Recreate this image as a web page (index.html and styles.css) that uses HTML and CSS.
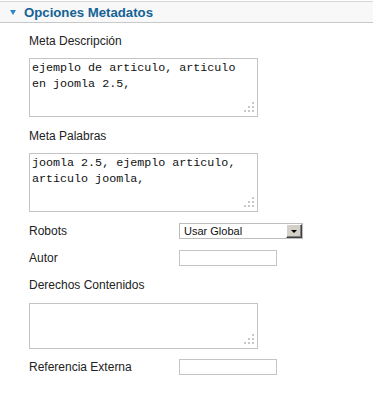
FILE: index.html
```html
<!DOCTYPE html>
<html lang="es">
<head>
  <meta charset="UTF-8">
  <title>Opciones Metadatos</title>
  <link rel="stylesheet" href="styles.css">
</head>
<body>

  <div class="pane">
    <h3 class="pane-title"><span class="arrow"></span>Opciones Metadatos</h3>

    <div class="pane-body">
      <label class="label">Meta Descripción</label>
      <div class="area-wrap tall">
        <textarea class="area">ejemplo de articulo, articulo en joomla 2.5,</textarea>
        <span class="grip"></span>
      </div>

      <label class="label gap">Meta Palabras</label>
      <div class="area-wrap tall">
        <textarea class="area">joomla 2.5, ejemplo articulo, articulo joomla,</textarea>
        <span class="grip"></span>
      </div>

      <div class="row first">
        <span class="label">Robots</span>
        <div class="select">
          <span class="select-text">Usar Global</span>
          <span class="select-btn"><span class="tri"></span></span>
        </div>
      </div>

      <div class="row">
        <span class="label">Autor</span>
        <input type="text" class="text-input">
      </div>

      <label class="label gap">Derechos Contenidos</label>
      <div class="area-wrap short">
        <textarea class="area"></textarea>
        <span class="grip"></span>
      </div>

      <div class="row last">
        <span class="label">Referencia Externa</span>
        <input type="text" class="text-input">
      </div>
    </div>
  </div>

</body>
</html>
```

FILE: styles.css
```css
body {
  margin: 0;
  font-family: Arial, "Liberation Sans", sans-serif;
  background: #fff;
  color: #222;
}
.pane {
  width: 373px;
}
.pane-title {
  margin: 1px 0 0 0;
  height: 20px;
  border-top: 1px solid #d6d6d6;
  border-bottom: 1px solid #c8c8c8;
  background-color: #f8f8f8;
  display: flex;
  align-items: center;
  padding-left: 10px;
  font-size: 13.2px;
  font-weight: bold;
  color: #146295;
}
.arrow {
  width: 0;
  height: 0;
  border-left: 3.5px solid transparent;
  border-right: 3.5px solid transparent;
  border-top: 5px solid #2f87c9;
  margin-right: 8px;
  margin-top: 1px;
}
.pane-body {
  display: flex;
  flex-direction: column;
  padding-left: 29px;
}
.label {
  display: block;
  font-size: 12px;
  line-height: 14px;
  height: 14px;
  margin-top: 11px;
}
.label.gap {
  margin-top: 12px;
}
.area-wrap {
  position: relative;
  width: 229px;
  margin-top: 10px;
}
.area-wrap.tall {
  height: 59px;
}
.area-wrap.short {
  height: 46px;
  margin-top: 11px;
}
.area {
  box-sizing: border-box;
  display: block;
  width: 100%;
  height: 100%;
  margin: 0;
  padding: 1px 2px;
  border: 1px solid #c4c4c4;
  font-family: "Courier New", "Liberation Mono", monospace;
  font-size: 11.7px;
  line-height: 16px;
  color: #111;
  resize: none;
  overflow: hidden;
}
.grip {
  position: absolute;
  right: 4px;
  bottom: 5px;
  width: 2px;
  height: 2px;
  background: #c8c8c8;
  box-shadow: -4px 0 #c8c8c8, -8px 0 #c8c8c8, 0 -4px #c8c8c8, -4px -4px #c8c8c8, 0 -8px #c8c8c8;
}
.row {
  display: grid;
  grid-template-columns: 150px auto;
  align-items: center;
  height: 16px;
  margin-top: 11px;
}
.row .label {
  margin-top: 0;
}
.row.last {
  margin-top: 10px;
}
.select {
  box-sizing: border-box;
  width: 124px;
  height: 16px;
  border: 1px solid #bdbdbd;
  display: flex;
  align-items: center;
  justify-content: space-between;
  background: #fff;
}
.select-text {
  font-size: 11px;
  padding-left: 4px;
  color: #111;
}
.select-btn {
  box-sizing: border-box;
  width: 16px;
  height: 14px;
  background: #d4d0c8;
  border-top: 1px solid #fff;
  border-left: 1px solid #fff;
  border-right: 1px solid #404040;
  border-bottom: 1px solid #404040;
  box-shadow: inset -1px -1px 0 #808080;
  display: flex;
  align-items: center;
  justify-content: center;
}
.tri {
  width: 0;
  height: 0;
  border-left: 3px solid transparent;
  border-right: 3px solid transparent;
  border-top: 3px solid #000;
  margin-top: 1px;
}
.text-input {
  box-sizing: border-box;
  width: 98px;
  height: 16px;
  margin: 0;
  padding: 0 2px;
  border: 1px solid #c4c4c4;
  font-size: 11px;
}
```
